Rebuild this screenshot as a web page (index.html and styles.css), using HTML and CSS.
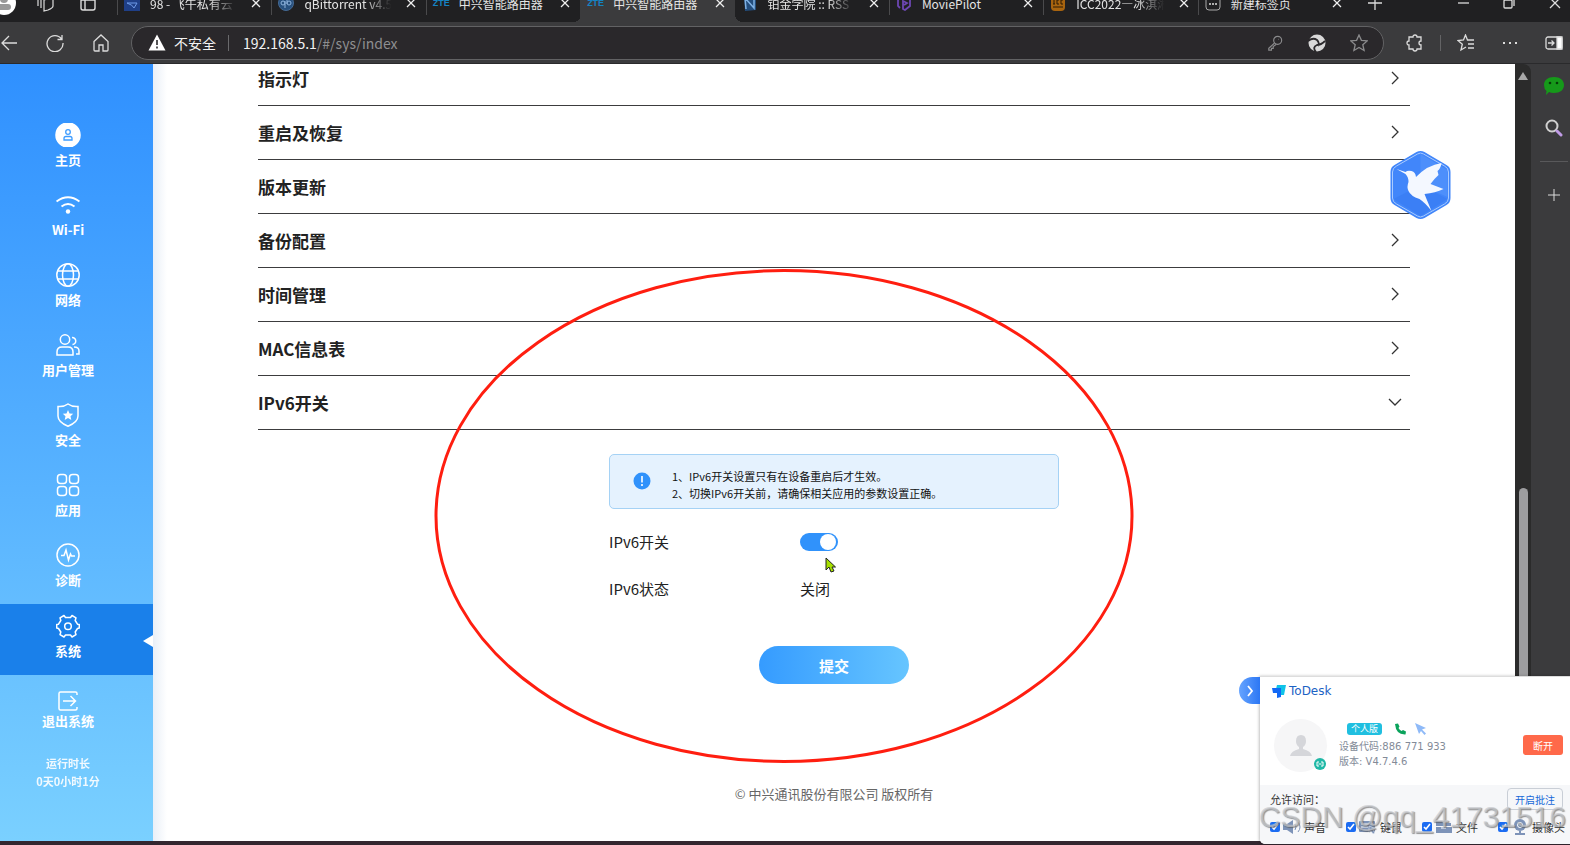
FILE: index.html
```
<!DOCTYPE html>
<html lang="zh-CN">
<head>
    <meta charset="UTF-8">
    <meta name="viewport" content="width=device-width, initial-scale=1.0">
    <title>中兴智能路由器</title>
    <link rel="stylesheet" href="styles.css">
</head>
<body>
    <header class="tabs">
        <div class="tabs-start">
            <svg class="profile" viewBox="0 0 24 24" width="24" height="24"><circle cx="12" cy="12" r="12" fill="#fff"/><circle cx="12" cy="8" r="4" fill="#999"/><rect x="5" y="13" width="14" height="6" rx="3" fill="#999"/></svg>
            <svg viewBox="0 0 18 18" width="18" height="18" fill="none" stroke="#ddd" stroke-width="1.2"><path d="M8 6l7-2q2 0 2 2v6q0 2-5 4l-4 1zM5 14V5q0-2 2-2l5-1M2 12V4q0-2 2-2l5-1"/></svg>
            <svg viewBox="0 0 18 18" width="18" height="18" fill="none" stroke="#ddd" stroke-width="1.4"><rect x="2" y="2" width="14" height="14" rx="2"/><path d="M2 6h14M6 6v10"/></svg>
        </div>
        <nav class="tab-list">
            <div class="tab">
                <svg viewBox="0 0 16 16" width="16" height="16"><rect width="16" height="16" fill="#1f3f87"/><path d="M3 8h10l-3 5q-1-3-7-5z" fill="none" stroke="#6f9be8"/></svg>
                <span class="tab-title fade">98 - 飞牛私有云</span>
                <button class="tab-close" aria-label="关闭"><svg viewBox="0 0 10 10" width="10" height="10"><path d="M1 1l8 8M9 1L1 9"/></svg></button>
            </div>
            <div class="tab">
                <svg viewBox="0 0 16 16" width="16" height="16"><circle cx="8" cy="8" r="7.5" fill="#28517f" stroke="#456a94"/><path d="M6.500 6v6M11 4v4M10 3v6" stroke="none"/><circle cx="5" cy="8" r="2" fill="none" stroke="#8fb4de"/><circle cx="11" cy="8" r="2" fill="none" stroke="#8fb4de"/><path d="M7 6v7M9 3v6" stroke="#8fb4de"/></svg>
                <span class="tab-title fade">qBittorrent v4.5.</span>
                <button class="tab-close" aria-label="关闭"><svg viewBox="0 0 10 10" width="10" height="10"><path d="M1 1l8 8M9 1L1 9"/></svg></button>
            </div>
            <div class="tab">
                <span class="zte">ZTE</span>
                <span class="tab-title">中兴智能路由器</span>
                <button class="tab-close" aria-label="关闭"><svg viewBox="0 0 10 10" width="10" height="10"><path d="M1 1l8 8M9 1L1 9"/></svg></button>
            </div>
            <div class="tab active">
                <span class="zte">ZTE</span>
                <span class="tab-title">中兴智能路由器</span>
                <button class="tab-close" aria-label="关闭"><svg viewBox="0 0 10 10" width="10" height="10"><path d="M1 1l8 8M9 1L1 9"/></svg></button>
            </div>
            <div class="tab after-active">
                <svg viewBox="0 0 16 16" width="16" height="16" fill="none"><path d="M2 0l12 0v15L3 16z" fill="#234d7c"/><path d="M4 14L3 3l9 10V1" stroke="#7fb1e4" stroke-width="1.5"/></svg>
                <span class="tab-title fade">铂金学院 :: RSS</span>
                <button class="tab-close" aria-label="关闭"><svg viewBox="0 0 10 10" width="10" height="10"><path d="M1 1l8 8M9 1L1 9"/></svg></button>
            </div>
            <div class="tab">
                <svg viewBox="0 0 16 16" width="16" height="16" fill="none" stroke="#6d47b3" stroke-width="1.8"><path d="M9 1l5 3v7l-5 4-2-1V6l4 2-3 2M5 2L2 5v6l2 2"/></svg>
                <span class="tab-title">MoviePilot</span>
                <button class="tab-close" aria-label="关闭"><svg viewBox="0 0 10 10" width="10" height="10"><path d="M1 1l8 8M9 1L1 9"/></svg></button>
            </div>
            <div class="tab">
                <svg viewBox="0 0 16 16" width="16" height="16"><path d="M1 0h14v12q0 4-4 4H5q-4 0-4-4z" fill="#a8640f"/><path d="M3 4h2M4 4v5M3 9h2M9 5H7v4h2M13 5h-2v4h2M3 12h10" stroke="#2a1a06" fill="none"/></svg>
                <span class="tab-title fade">ICC2022—冰淇淋</span>
                <button class="tab-close" aria-label="关闭"><svg viewBox="0 0 10 10" width="10" height="10"><path d="M1 1l8 8M9 1L1 9"/></svg></button>
            </div>
            <div class="tab">
                <svg viewBox="0 0 16 16" width="16" height="16" fill="none" stroke="#aaa"><rect x="1" y="1" width="14" height="14" rx="3"/><path d="M1 4h14"/><path d="M4 9h2M7 9h2M10 9h2" stroke="#ddd" stroke-width="1.5"/></svg>
                <span class="tab-title">新建标签页</span>
                <button class="tab-close" aria-label="关闭"><svg viewBox="0 0 10 10" width="10" height="10"><path d="M1 1l8 8M9 1L1 9"/></svg></button>
            </div>
        </nav>
        <div class="tabs-end">
            <button class="icon-btn" aria-label="新建标签页"><svg viewBox="0 0 14 14" width="14" height="14"><path d="M7 0v14M0 7h14"/></svg></button>
            <span class="spacer"></span>
            <button class="icon-btn" aria-label="最小化"><svg viewBox="0 0 12 12" width="12" height="12"><path d="M1 6h11"/></svg></button>
            <button class="icon-btn" aria-label="还原"><svg viewBox="0 0 12 12" width="12" height="12"><rect x="1" y="3" width="8" height="8" rx="1"/><path d="M3 1h6q2 0 2 2v6"/></svg></button>
            <button class="icon-btn" aria-label="关闭窗口"><svg viewBox="0 0 12 12" width="12" height="12"><path d="M1 1l10 10M11 1L1 11"/></svg></button>
        </div>
    </header>

    <div class="toolbar">
        <div class="nav-buttons">
            <button class="icon-btn" aria-label="后退"><svg viewBox="0 0 18 18" width="18" height="18"><path d="M17 9H2M9 2L2 9l7 7"/></svg></button>
            <button class="icon-btn" aria-label="刷新"><svg viewBox="0 0 18 18" width="18" height="18"><path d="M15.500 5A8 8 0 1 0 17 9M16 1v4.500h-4.500"/></svg></button>
            <button class="icon-btn" aria-label="主页"><svg viewBox="0 0 18 18" width="18" height="18"><path d="M2 7.500L9 1l7 6.500V16q0 1-1 1h-4v-6H7v6H3q-1 0-1-1z"/></svg></button>
        </div>
        <div class="address">
            <svg viewBox="0 0 18 17" width="18" height="17"><path d="M9 0.500L17.500 16.500H0.500z" fill="#fff"/><path d="M9 6v5M9 12.500v2" stroke="#2a282b" stroke-width="1.600"/></svg>
            <span class="unsafe">不安全</span>
            <span class="url">192.168.5.1<span class="path">/#/sys/index</span></span>
            <button class="icon-btn dim" aria-label="密码"><svg viewBox="0 0 18 18" width="16" height="16"><circle cx="12" cy="6" r="4.500"/><path d="M8.500 9L2 15v2h3v-2h2v-2l3.500-2.500M13 5h0.500"/></svg></button>
            <button class="icon-btn" aria-label="助手"><svg viewBox="0 0 18 18" width="18" height="18"><circle cx="9" cy="9" r="8.500" fill="#d8d8d8" stroke="none"/><path d="M0 7q5-4 9-1 3 3 1 6M8 18q-4-5 1-7 4 0 8-4" stroke="#2a282b" stroke-width="1.800"/></svg></button>
            <button class="icon-btn dim" aria-label="收藏"><svg viewBox="0 0 18 18" width="18" height="18"><path d="M9 1l2.400 5.300 5.800.6-4.400 3.800 1.300 5.800L9 13.500l-5.100 3 1.300-5.800L.8 6.900l5.800-.6z"/></svg></button>
        </div>
        <div class="tool-buttons">
            <button class="icon-btn" aria-label="扩展"><svg viewBox="0 0 18 18" width="18" height="18"><path d="M3 3h4q0-2 2-2t2 2h4v4q-2 0-2 2t2 2v4h-4q0 2-2 2t-2-2H3v-4q-2 0-2-2t2-2z"/></svg></button>
            <span class="tool-line"></span>
            <button class="icon-btn" aria-label="收藏夹"><svg viewBox="0 0 18 18" width="18" height="18"><path d="M9 13l-5 3 1.300-5.800L1 6.500l5.500-.5L8.500 1l2 5H17M11 10h6M11 14h6"/></svg></button>
            <button class="icon-btn" aria-label="更多"><svg viewBox="0 0 18 18" width="18" height="18"><path d="M2 9h2M8 9h2M14 9h2" stroke-width="2"/></svg></button>
            <button class="icon-btn" aria-label="侧栏"><svg viewBox="0 0 18 14" width="18" height="14"><rect x="1" y="1" width="16" height="12" rx="2"/><path d="M12 1h5v12h-5z" fill="#fff"/><path d="M3 7h6M6.500 4.500L9 7 6.500 9.500"/></svg></button>
        </div>
    </div>

    <div class="page">
        <aside class="sidebar">
            <nav class="menu">
                <a class="menu-item" href="#home">
                    <svg viewBox="0 0 24 24" width="26" height="24"><circle cx="12" cy="12" r="12" fill="#fff"/><g stroke="#3d9cff" stroke-width="1.300"><circle cx="12" cy="9" r="2.300"/><path d="M8 17v-1.500q0-2 2-2h4q2 0 2 2V17z"/></g></svg>
                    主页
                </a>
                <a class="menu-item" href="#wifi">
                    <svg viewBox="0 0 24 24" width="24" height="24"><path d="M0.500 8.500Q12 0 23.500 8.500M5.500 13.500Q12 8.500 18.500 13.500" stroke-width="2"/><circle cx="12" cy="18.500" r="2.200" fill="#fff" stroke="none"/></svg>
                    Wi-Fi
                </a>
                <a class="menu-item" href="#network">
                    <svg viewBox="0 0 24 24" width="24" height="24"><circle cx="12" cy="12" r="11.200"/><ellipse cx="12" cy="12" rx="5.500" ry="11.200"/><path d="M2 8h20M2 16h20"/></svg>
                    网络
                </a>
                <a class="menu-item" href="#users">
                    <svg viewBox="0 0 24 24" width="24" height="24"><circle cx="9" cy="6.500" r="4.700"/><path d="M1 22v-3q0-5 5-5h6q5 0 5 5v3zM16 4.500a3.500 3.500 0 0 1 .5 7M18 14q5 0 5 4v3h-3"/></svg>
                    用户管理
                </a>
                <a class="menu-item" href="#security">
                    <svg viewBox="0 0 24 24" width="24" height="24"><path d="M12 1q4 3 10 2.500V13q0 6-10 10.300Q2 19 2 13V3.500Q8 4 12 1z"/><path d="M12 7l1.500 3.400 3.700.4-2.700 2.400.8 3.700-3.300-2-3.300 2 .8-3.700-2.700-2.400 3.700-.4z" fill="#fff" stroke="none"/></svg>
                    安全
                </a>
                <a class="menu-item" href="#apps">
                    <svg viewBox="0 0 24 24" width="24" height="24"><rect x="1.500" y="1.500" width="9" height="9" rx="3"/><rect x="13.500" y="1.500" width="9" height="9" rx="3"/><rect x="1.500" y="13.500" width="9" height="9" rx="3"/><rect x="13.500" y="13.500" width="9" height="9" rx="3"/></svg>
                    应用
                </a>
                <a class="menu-item" href="#diagnose">
                    <svg viewBox="0 0 24 24" width="24" height="24"><circle cx="12" cy="12" r="11"/><path d="M5 12.500h3l2-5.500 2.500 10 2-6 1 2H19" stroke-width="1.500"/></svg>
                    诊断
                </a>
                <a class="menu-item current" href="#sys">
                    <svg viewBox="0 0 24 24" width="24" height="24" stroke-linejoin="round"><path d="M8 1.500L9.500 3.500h5L16 1.500l4 2.300-.8 2.700 2.300 3.700 1.800.3v3.500l-1.800.5-2.300 3.500.8 2.700-4 2.300-1.500-2h-5L8 23l-4-2.300.8-2.700-2.300-3.500-1.800-.5v-3.500l1.800-.3 2.300-3.700L4 3.800z"/><circle cx="12" cy="12.300" r="3.300"/></svg>
                    系统
                </a>
            </nav>
            <a class="logout" href="#logout">
                <svg viewBox="0 0 20 20" width="20" height="20"><path d="M19 4V2.500q0-1.500-1.500-1.500h-15Q1 1 1 2.500v15Q1 19 2.500 19h15q1.500 0 1.500-1.500V16M5 10h12M12.500 5l5 5-5 5"/></svg>
                退出系统
            </a>
            <div class="uptime">
                <p>运行时长</p>
                <p>0天0小时1分</p>
            </div>
        </aside>

        <main class="content">
            <div class="sections">
                <button class="section">指示灯 <svg viewBox="0 0 16 16" width="16" height="16"><path d="M5 2l6 6-6 6"/></svg></button>
                <button class="section">重启及恢复 <svg viewBox="0 0 16 16" width="16" height="16"><path d="M5 2l6 6-6 6"/></svg></button>
                <button class="section">版本更新 <svg viewBox="0 0 16 16" width="16" height="16"><path d="M5 2l6 6-6 6"/></svg></button>
                <button class="section">备份配置 <svg viewBox="0 0 16 16" width="16" height="16"><path d="M5 2l6 6-6 6"/></svg></button>
                <button class="section">时间管理 <svg viewBox="0 0 16 16" width="16" height="16"><path d="M5 2l6 6-6 6"/></svg></button>
                <button class="section">MAC信息表 <svg viewBox="0 0 16 16" width="16" height="16"><path d="M5 2l6 6-6 6"/></svg></button>
                <button class="section">IPv6开关 <svg viewBox="0 0 16 16" width="16" height="16"><path d="M2 5l6 6 6-6"/></svg></button>
            </div>

            <form class="ipv6">
                <div class="notice">
                    <svg viewBox="0 0 18 18" width="18" height="18"><circle cx="9" cy="9" r="8.500" fill="#3092fb"/><path d="M9 4v6.500M9 12v2" stroke="#fff" stroke-width="1.600"/></svg>
                    <div>
                        <p>1、IPv6开关设置只有在设备重启后才生效。</p>
                        <p>2、切换IPv6开关前，请确保相关应用的参数设置正确。</p>
                    </div>
                </div>
                <div class="field">
                    <label for="ipv6-switch">IPv6开关</label>
                    <input class="switch" type="checkbox" id="ipv6-switch" checked>
                </div>
                <div class="field">
                    <span class="label">IPv6状态</span>
                    <span>关闭</span>
                </div>
                <button class="submit" type="button">提交</button>
            </form>

            <footer>© 中兴通讯股份有限公司 版权所有</footer>

            <!-- floating download helper -->
            <svg class="bird" viewBox="0 0 62 70" width="63" height="70">
                <path d="M27 2q4-2 8 0l22 13q4 2 4 7v26q0 5-4 7L35 68q-4 2-8 0L5 55q-4-2-4-7V22q0-5 4-7z" fill="#4186fa"/>
                <path d="M31 4l27 16v27L31 35z" fill="#4d8ffb"/><path d="M31 35l27 14-27 17L4 49z" fill="#3b7ff5"/>
                <path d="M28 4q3-2 6 0l21 12q4 2 4 6v26q0 4-4 6L34 66q-3 2-6 0L7 54q-4-2-4-6V22q0-4 4-6z" fill="none" stroke="#a9cbff"/>
                <path d="M7 19l9 3q2-2 6-1 4 1 4.500 6Q38 15 52 13q-1 6-4 8l1 4-4 4-4 5 13 5q-8 4-19 5l2 5 5 12q-6-8-12-12-9-3-11-8-2-4 0-9 0-5-3-8z" fill="#f4f8ff"/>
            </svg>
        </main>

        <div class="scrollbar">
            <svg viewBox="0 0 10 8" width="10" height="8"><path d="M5 0l5 8H0z" fill="#a8a8a8"/></svg>
            <div class="thumb"></div>
        </div>

        <aside class="dock">
            <svg viewBox="0 0 22 20" width="22" height="20"><path d="M11 1c6 0 10 3 10 8s-4 8-10 8q-3 0-5-1l-3 3 .5-4Q1 13 1 9c0-5 4-8 10-8z" fill="#16991a"/><circle cx="7" cy="7" r="1.300" fill="#063c08"/><circle cx="14" cy="7" r="1.300" fill="#063c08"/></svg>
            <svg viewBox="0 0 18 18" width="18" height="18" fill="none"><circle cx="7" cy="7" r="5.500" stroke="#d0d0d0" stroke-width="2"/><path d="M12 12l4 4" stroke="#c09be6" stroke-width="3" stroke-linecap="round"/></svg>
            <hr>
            <svg viewBox="0 0 14 14" width="14" height="14"><path d="M7 1v12M1 7h12" stroke="#ddd"/></svg>
        </aside>
    </div>
    <div class="taskbar"></div>

    <!-- red highlight and pointer over the page -->
    <svg class="highlight" viewBox="0 0 700 494" width="700" height="494"><ellipse cx="350" cy="247" rx="348" ry="245.500" fill="none" stroke="#ff1e10" stroke-width="3"/></svg>
    <svg class="pointer" viewBox="0 0 11 16" width="11" height="16"><path d="M1 1v12l3-3 2 5 3-1-2-4h3.500z" fill="#a6e000" stroke="#222"/></svg>

    <section class="todesk">
        <button class="collapse" aria-label="收起"><svg viewBox="0 0 8 12" width="8" height="12"><path d="M2 1l4 5-4 5" fill="none" stroke="#fff" stroke-width="1.800"/></svg></button>
        <div class="todesk-title">
            <svg viewBox="0 0 14 13" width="14" height="13"><path d="M5 0h9l-2 10H9V4H4z" fill="#10c3e8"/><path d="M0 3h9v9l-4 1V8H1z" fill="#1268f5"/></svg>
            ToDesk
        </div>
        <div class="device">
            <div class="avatar">
                <svg viewBox="0 0 22 21" width="22" height="21"><path d="M11 0q5 0 5 6 0 4-3 6v2q8 2 9 7H0q1-5 9-7v-2q-3-2-3-6 0-6 5-6z" fill="#d5d6da"/></svg>
                <svg class="link" viewBox="0 0 12 12" width="12" height="12"><circle cx="6" cy="6" r="6" fill="#1fb8a6"/><path d="M5 4H3v4h2M7 4h2v4H7M4.500 6h3" fill="none" stroke="#fff"/></svg>
            </div>
            <div class="device-info">
                <div class="badges">
                    <span class="badge">个人版</span>
                    <svg viewBox="0 0 12 12" width="12" height="12"><path d="M1 1l3-.5 1.500 3L4.500 5q1 2 3 3L9 7l3 1.500-.5 3Q2 12 1 1z" fill="#0ba35c"/></svg>
                    <svg viewBox="0 0 12 12" width="12" height="12"><path d="M0 0l11 5-4 1.500 4 4L9.500 12 6 8l-2 3z" fill="#8fbaf8"/></svg>
                </div>
                <p>设备代码:886 771 933</p>
                <p>版本: V4.7.4.6</p>
            </div>
            <button class="disconnect">断开</button>
        </div>
        <div class="access">
            <div class="access-head">
                <span>允许访问：</span>
                <button class="annotate">开启批注</button>
            </div>
            <div class="options">
                <label><input type="checkbox" checked><svg viewBox="0 0 18 14" width="18" height="14"><path d="M0 4h4l6-4v14l-6-4H0z" fill="#7d93b8"/><path d="M12 4q2 3 0 6M15 2q4 5 0 10" fill="none" stroke="#7d93b8"/></svg>声音</label>
                <label><input type="checkbox" checked><svg viewBox="0 0 18 14" width="18" height="14"><rect y="1" width="16" height="11" rx="1" fill="#7d93b8"/><path d="M2 4h12M2 7h7" stroke="#fff"/><path d="M10 6l7 3-3 1 2 3-2 1-2-3-2 2z" fill="#7d93b8" stroke="#fff" stroke-width=".5"/></svg>键鼠</label>
                <label><input type="checkbox" checked><svg viewBox="0 0 18 14" width="18" height="14"><path d="M1 1h6l1 2h8v3H1zM1 7h16v6H1z" fill="#7d93b8"/><path d="M6 8h5" stroke="#fff"/></svg>文件</label>
                <label><input type="checkbox" checked><svg viewBox="0 0 18 16" width="18" height="16"><circle cx="9" cy="6" r="6" fill="#7d93b8"/><circle cx="9" cy="6" r="2.500" fill="none" stroke="#fff"/><path d="M9 12v3M4 15h10" stroke="#7d93b8" stroke-width="2"/></svg>摄像头</label>
            </div>
        </div>
    </section>
    <div class="watermark">CSDN @qq_41731516</div>
</body>
</html>
```
FILE: styles.css
```
* {
    box-sizing: border-box;
}

body {
    position: relative;
    display: flex;
    flex-direction: column;
    height: 100vh;
    margin: 0;
    overflow: hidden;
    background: #3b3b3d;
    color: #222;
    font-family: 'Noto Sans CJK SC', sans-serif;
}

p {
    margin: 0;
}

button {
    padding: 0;
    border: none;
    background: none;
    font-family: inherit;
    cursor: pointer;
}

a {
    text-decoration: none;
}

svg {
    flex: none;
}

/* browser tabs, the window sits partly above the screen */
.tabs {
    display: flex;
    flex: none;
    height: 38px;
    margin-top: -16px;
    background: #202022;
    color: #e4e4e4;
    font-size: 12px;
}

.tabs-start {
    display: flex;
    align-items: center;
    flex: none;
    gap: 25px;
    width: 117px;
}

.tabs-start .profile {
    margin-left: -8px;
    margin-right: -5px;
}

.tab-list {
    display: flex;
    flex: 1;
    min-width: 0;
}

.tab {
    position: relative;
    display: flex;
    align-items: center;
    flex: 1 1 0;
    gap: 10px;
    min-width: 0;
    padding: 0 10px 0 6px;
    border-left: 1px solid transparent;
    border-image: linear-gradient(#4a4a4c 80%, transparent 80%) 1;
}

.tab.active,
.tab.after-active {
    border-image: none;
}

.tab.active {
    background: #3b3b3d;
}

/* rounded feet of the active tab */
.tab.active::before,
.tab.active::after {
    content: '';
    position: absolute;
    bottom: 0;
    width: 8px;
    height: 8px;
}

.tab.active::before {
    left: -8px;
    background: radial-gradient(circle at 0 0, transparent 8px, #3b3b3d 8px);
}

.tab.active::after {
    right: -8px;
    background: radial-gradient(circle at 100% 0, transparent 8px, #3b3b3d 8px);
}

.tab-title {
    flex: 1;
    white-space: nowrap;
}

.tab-title.fade {
    -webkit-mask-image: linear-gradient(to right, #000 65%, transparent 95%);
    mask-image: linear-gradient(to right, #000 65%, transparent 95%);
}

.tab-close {
    display: flex;
    width: 10px;
}

.tab-close svg {
    stroke: #eee;
    stroke-width: 1.3;
}

.zte {
    width: 16px;
    color: #1583c4;
    font-family: 'Liberation Sans', sans-serif;
    font-size: 9px;
    font-weight: bold;
}

.tabs-end {
    display: flex;
    align-items: center;
    flex: none;
    width: 218px;
    padding-right: 2px;
}

.spacer {
    flex: 1;
}

.icon-btn {
    display: flex;
    align-items: center;
    justify-content: center;
    flex: none;
    width: 46px;
    height: 32px;
}

.tabs-end .icon-btn:last-child {
    margin-right: -10px;
}

.icon-btn svg {
    fill: none;
    stroke: #dcdcdc;
    stroke-width: 1.3;
}

.icon-btn.dim svg {
    stroke: #8a8a8c;
}

.toolbar {
    display: flex;
    align-items: center;
    flex: none;
    height: 42px;
    border-bottom: 1px solid #2a2a2c;
}

.nav-buttons {
    display: flex;
    margin-left: -14px;
}

.address {
    display: flex;
    align-items: center;
    flex: 1;
    height: 34px;
    margin-left: 7px;
    padding: 0 3px 0 16px;
    border: 1px solid #626264;
    border-radius: 17px;
    background: #2a282b;
    color: #f2f2f2;
    font-size: 14px;
}

.address .icon-btn {
    width: 42px;
}

.unsafe {
    margin: 0 12px 0 8px;
}

.url {
    flex: 1;
    padding-left: 14px;
    border-left: 1px solid #6a6a6c;
    line-height: 16px;
}

.path {
    color: #8e8e90;
}

.tool-buttons {
    display: flex;
    align-items: center;
    margin: 0 -6px 0 9px;
}

.tool-buttons .icon-btn {
    width: 44px;
}

.tool-line {
    width: 1px;
    height: 16px;
    margin: 0 3px;
    background: #636365;
}

.page {
    display: flex;
    flex: 1;
    min-height: 0;
}

/* router menu */
.sidebar {
    display: flex;
    flex-direction: column;
    width: 153px;
    padding-top: 50px;
    background: linear-gradient(#2f90ff, #7ad0ff);
    color: #fff;
    font-size: 13px;
    font-weight: bold;
}

.menu-item,
.logout {
    display: flex;
    flex-direction: column;
    align-items: center;
    height: 70px;
    padding: 9px 17px 0 0;
    gap: 3px;
    color: #fff;
    line-height: 20px;
}

.menu-item svg,
.logout svg {
    fill: none;
    stroke: #fff;
    stroke-width: 1.5;
}

.menu-item.current {
    position: relative;
    height: 71px;
    padding-top: 10px;
    background: #1a80ea;
}

.menu-item.current::after {
    content: '';
    position: absolute;
    top: 31px;
    right: 0;
    border: 6px solid transparent;
    border-right: 10px solid #fff;
    border-left: none;
}

.logout {
    padding-top: 16px;
    gap: 0;
}

.uptime {
    padding: 9px 17px 0 0;
    font-size: 11px;
    line-height: 18px;
    text-align: center;
    opacity: 0.9;
}

.content {
    position: relative;
    flex: 1;
    overflow: hidden;
    padding: 0 105px;
    background: linear-gradient(to right, #e9eff7, #fff 14px);
}

.sections {
    margin-top: -12px;
}

.section {
    display: flex;
    align-items: center;
    justify-content: space-between;
    width: 100%;
    height: 54px;
    padding: 0 7px 1px 0;
    border-bottom: 1px solid #3c3c3e;
    color: #222;
    font-size: 17px;
    font-weight: bold;
}

.section svg {
    fill: none;
    stroke: #333;
    stroke-width: 1.3;
}

.ipv6 {
    width: 450px;
    margin: 24px auto 0;
    font-size: 15px;
}

.notice {
    display: flex;
    align-items: center;
    gap: 21px;
    margin-bottom: 9px;
    padding: 13px 23px 6px;
    border: 1px solid #a5d2f5;
    border-radius: 5px;
    background: #e5f2fe;
    color: #111;
    font-size: 11px;
    line-height: 17px;
}

.notice svg {
    margin-bottom: 8px;
}

.field {
    display: flex;
    align-items: center;
    height: 47px;
}

.field label,
.field .label {
    width: 191px;
}

.switch {
    appearance: none;
    width: 38px;
    height: 18px;
    margin: 0;
    padding: 1px 2px;
    border-radius: 9px;
    background: #3092fb;
}

.switch::before {
    content: '';
    display: block;
    width: 16px;
    height: 16px;
    margin-left: auto;
    border-radius: 50%;
    background: #fff;
}

.submit {
    display: block;
    width: 150px;
    height: 38px;
    margin: 34px auto 0;
    border-radius: 19px;
    background: linear-gradient(to right, #359bff, #66c5ff);
    color: #fff;
    font-size: 15px;
    font-weight: bold;
}

footer {
    margin-top: 100px;
    color: #666;
    font-size: 13px;
    line-height: 20px;
    text-align: center;
}

.bird {
    position: absolute;
    top: 86px;
    right: 63px;
}

.scrollbar {
    display: flex;
    flex-direction: column;
    align-items: center;
    width: 16px;
    padding-top: 8px;
    border-radius: 0 8px 0 0;
    background: #2b2b2b;
}

.thumb {
    flex: 1;
    width: 9px;
    margin-top: 408px;
    border-radius: 5px;
    background: #9d9d9f;
}

.dock {
    display: flex;
    flex-direction: column;
    align-items: center;
    width: 39px;
    padding: 12px 0 0 6px;
}

.dock hr {
    width: 28px;
    margin: 24px 0 26px;
    border: none;
    border-top: 1px solid #59595b;
}

.dock svg:nth-child(2) {
    margin-top: 23px;
}

.taskbar {
    flex: none;
    height: 4px;
    background: #33262f;
}

.highlight {
    position: absolute;
    top: 269px;
    left: 434px;
    pointer-events: none;
}

.pointer {
    position: absolute;
    top: 557px;
    left: 825px;
}

/* remote desktop panel */
.todesk {
    position: absolute;
    right: 0;
    bottom: 1px;
    width: 310px;
    border-top: 1px solid #ddd;
    border-radius: 0 0 0 5px;
    background: #fff;
    box-shadow: -1px 0 3px rgba(0, 0, 0, 0.25);
    font-family: 'DejaVu Sans', 'Noto Sans CJK SC', sans-serif;
    font-size: 10px;
}

.collapse {
    position: absolute;
    top: 0;
    left: -21px;
    display: flex;
    align-items: center;
    justify-content: center;
    width: 21px;
    height: 27px;
    border-radius: 14px 0 0 14px;
    background: linear-gradient(to right, #66a4ff, #2c77f4);
}

.todesk-title {
    display: flex;
    align-items: center;
    gap: 3px;
    height: 28px;
    padding-left: 12px;
    color: #1c62c4;
    font-size: 12px;
}

.device {
    display: flex;
    align-items: center;
    gap: 12px;
    height: 80px;
    padding: 0 7px 0 14px;
}

.avatar {
    position: relative;
    display: flex;
    align-items: center;
    justify-content: center;
    width: 53px;
    height: 53px;
    border-radius: 50%;
    background: #f6f6f7;
}

.avatar .link {
    position: absolute;
    right: 1px;
    bottom: 2px;
}

.device-info {
    flex: 1;
    color: #838b98;
    line-height: 15px;
}

.badges {
    display: flex;
    align-items: center;
    gap: 9px;
    height: 15px;
    padding-left: 8px;
    margin-bottom: 2px;
}

.badge {
    width: 35px;
    margin-right: 3px;
    border-radius: 3px;
    background: #20bfe0;
    color: #fff;
    font-size: 9px;
    line-height: 12px;
    text-align: center;
}

.disconnect {
    width: 40px;
    height: 20px;
    border-radius: 3px;
    background: #ff694a;
    color: #fff;
    font-size: 10px;
}

.access {
    padding: 3px 0 9px 10px;
    border-radius: 0 0 0 5px;
    background: #f6f7f9;
    color: #333;
    font-size: 11px;
}

.access-head {
    display: flex;
    align-items: center;
    justify-content: space-between;
    height: 22px;
    margin-bottom: 8px;
    padding-right: 7px;
}

.annotate {
    width: 56px;
    height: 22px;
    border: 1px solid #c9ced6;
    border-radius: 4px;
    color: #1768d8;
    font-size: 10px;
}

.options {
    display: grid;
    grid-template-columns: repeat(4, 76px);
}

.options label {
    display: flex;
    align-items: center;
    gap: 3px;
    height: 17px;
    font-size: 11px;
    white-space: nowrap;
}

.options input {
    width: 10px;
    height: 10px;
    margin: 0;
    accent-color: #1c6cf2;
}

.watermark {
    position: absolute;
    right: 4px;
    bottom: 10px;
    color: rgba(200, 202, 206, 0.7);
    font-family: 'Liberation Sans', sans-serif;
    font-size: 30px;
    line-height: 36px;
    text-shadow: 1px 1px 1px rgba(80, 80, 80, 0.6);
    pointer-events: none;
}
```
